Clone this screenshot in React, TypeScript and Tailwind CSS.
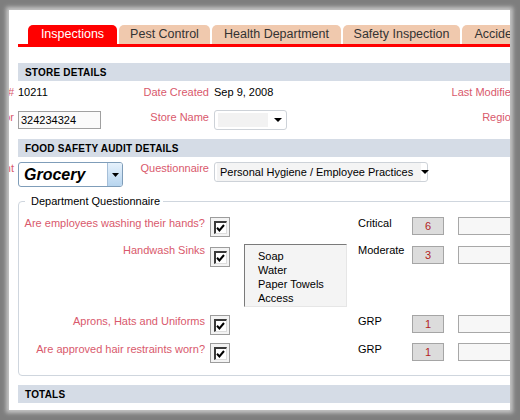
import React from 'react'

const label = 'text-[#d9596c]'

const tabs = [
  { name: 'Inspections', cls: 'w-[89px] bg-[#ff0000] text-white' },
  { name: 'Pest Control', cls: 'w-[91px] bg-[#f0c9ae] text-[#333]' },
  { name: 'Health Department', cls: 'w-[129px] bg-[#f0c9ae] text-[#333]' },
  { name: 'Safety Inspection', cls: 'w-[117px] bg-[#f0c9ae] text-[#333]' },
  { name: 'Accident Reports', cls: 'w-[120px] bg-[#f0c9ae] text-[#333]' },
]

function Arrow() {
  return (
    <svg width="8" height="4" viewBox="0 0 8 4">
      <path d="M0 0h8L4 4z" fill="#000" />
    </svg>
  )
}

function SectionBar({ title, className = '' }: { title: string; className?: string }) {
  return (
    <div className={`flex h-[18px] items-center bg-[#d5dce6] pl-[7px] text-[10px] font-bold tracking-[0.2px] ${className}`}>
      {title}
    </div>
  )
}

function Check() {
  return (
    <span className="flex h-[20px] w-[20px] shrink-0 items-center justify-center border border-[#9c9c9c] bg-[#f3f3f3]">
      <span className="flex h-[13px] w-[13px] items-center justify-center border-b border-l-2 border-r border-t-2 border-b-[#dcdcdc] border-l-[#3a3a3a] border-r-[#dcdcdc] border-t-[#3a3a3a] bg-white">
        <svg width="9" height="8" viewBox="0 0 9 8">
          <path d="M1 3.8L3.4 6.4L8 1" fill="none" stroke="#000" strokeWidth="2" />
        </svg>
      </span>
    </span>
  )
}

function QuestionRow({ q, sev, score, list }: { q: string; sev: string; score: string; list?: string[] }) {
  const off = list ? 'mt-[3px]' : ''
  const off2 = list ? 'mt-[2px]' : ''
  return (
    <div className="flex items-start">
      <span className={`w-[186px] shrink-0 whitespace-nowrap text-right leading-[13px] ${label}`}>{q}</span>
      <span className={`ml-[5px] ${off}`}>
        <Check />
      </span>
      <div className="ml-[14px] w-[103px] shrink-0">
        {list && (
          <div className="h-[63px] border-b border-l border-r border-t border-b-[#e6e6e6] border-l-[#7a7a7a] border-r-[#e6e6e6] border-t-[#7a7a7a] bg-[#f4f4f4] pl-[13px] pt-[4px] leading-[14px]">
            {list.map((i) => (
              <div key={i}>{i}</div>
            ))}
          </div>
        )}
      </div>
      <span className="ml-[11px] w-[54px] shrink-0 leading-[13px]">{sev}</span>
      <span className={`flex h-[18px] w-[32px] shrink-0 items-center justify-center border border-[#a5a5a5] bg-[#dcdcdc] text-[#b32424] ${off2}`}>
        {score}
      </span>
      <span className={`ml-[14px] h-[18px] w-[100px] shrink-0 border border-[#a8a8a8] bg-[#f7f7f7] ${off2}`} />
    </div>
  )
}

export default function App() {
  return (
    <div className="h-[420px] w-[520px] bg-[#7e7e7e] pl-[9px] pt-[10px] font-['Liberation_Sans',Arial,sans-serif] text-[11px] text-black">
      <div className="h-[400px] w-[501px] overflow-hidden bg-white shadow-[0_0_4px_3px_#c4c4c4]">
        <div className="w-[620px] pl-[9px] pt-[15px]">
          {/* Tabs */}
          <div className="flex gap-[2px] pl-[10px]">
            {tabs.map((t) => (
              <div
                key={t.name}
                className={`flex h-[19px] shrink-0 items-center justify-center whitespace-nowrap rounded-t-[5px] text-[12.5px] ${t.cls}`}
              >
                {t.name}
              </div>
            ))}
          </div>
          <div className="h-[3px] bg-[#ff0000]" />

          {/* Store details */}
          <SectionBar title="STORE DETAILS" className="mt-[16px]" />
          <div className="flex h-[22px] items-center">
            <div className="flex w-[110px] shrink-0">
              <span className={`-ml-[84px] mr-[4px] w-[80px] shrink-0 text-right ${label}`}>Store #</span>
              <span>10211</span>
            </div>
            <span className={`w-[81px] shrink-0 text-right ${label}`}>Date Created</span>
            <span className="ml-[5px] w-[200px] shrink-0">Sep 9, 2008</span>
            <span className={`w-[103px] shrink-0 whitespace-nowrap text-right ${label}`}>Last Modified</span>
          </div>
          <div className="mt-[7px] flex h-[20px] items-start">
            <div className="flex w-[110px] shrink-0 items-start">
              <span className={`-ml-[84px] mr-[4px] mt-[1px] w-[80px] shrink-0 text-right leading-[13px] ${label}`}>Inspector</span>
              <span className="mt-[1px] flex h-[18px] w-[83px] items-center border border-[#a0a0a0] bg-[#fafafa] pl-[2px]">324234324</span>
            </div>
            <span className={`mt-[1px] w-[81px] shrink-0 text-right leading-[13px] ${label}`}>Store Name</span>
            <div className="ml-[5px] w-[200px] shrink-0">
              <div className="flex h-[20px] w-[73px] items-center rounded-[3px] border border-[#cdd2d8] bg-white pl-[3px] pr-[4px]">
                <span className="h-[14px] w-[50px] bg-[#f2f2f2]" />
                <span className="ml-auto flex">
                  <Arrow />
                </span>
              </div>
            </div>
            <span className={`mt-[1px] w-[103px] shrink-0 text-right leading-[13px] ${label}`}>Region</span>
          </div>

          {/* Food safety */}
          <SectionBar title="FOOD SAFETY AUDIT DETAILS" className="mt-[9px]" />
          <div className="mt-[5px] flex h-[25px] items-start">
            <div className="flex w-[110px] shrink-0 items-start">
              <span className={`-ml-[84px] mr-[4px] w-[80px] shrink-0 text-right leading-[13px] ${label}`}>Department</span>
              <div className="flex h-[25px] w-[105px] shrink-0 overflow-hidden rounded-[3px] border border-[#7f9db9] bg-white">
                <span className="flex-1 pl-[5px] text-[16px] font-bold italic leading-[23px]">Grocery</span>
                <span className="flex w-[15px] items-center justify-center border-l border-[#a6bfd8] bg-linear-to-b from-[#e6f1fb] to-[#b7d5ef]">
                  <svg width="7" height="4" viewBox="0 0 7 4">
                    <path d="M0 0h7L3.5 4z" fill="#000" />
                  </svg>
                </span>
              </div>
            </div>
            <span className={`w-[81px] shrink-0 text-right leading-[13px] ${label}`}>Questionnaire</span>
            <div className="ml-[5px] flex h-[20px] w-[214px] shrink-0 items-center rounded-[3px] border border-[#cdd2d8] bg-white pl-[2px] pr-[4px]">
              <span className="whitespace-nowrap bg-[#f4f4f4] py-[1px] pl-[3px] pr-[8px]">Personal Hygiene / Employee Practices</span>
              <span className="ml-auto flex">
                <Arrow />
              </span>
            </div>
          </div>

          <fieldset className="mt-[7px] rounded-[4px] border border-[#cfd6de] pb-[12px] pt-[9px]">
            <legend className="ml-[6px] pl-[6px] pr-[3px] leading-[14px]">Department Questionnaire</legend>
            <QuestionRow q="Are employees washing their hands?" sev="Critical" score="6" />
            <div className="mt-[7px]">
              <QuestionRow
                q="Handwash Sinks"
                sev="Moderate"
                score="3"
                list={['Soap', 'Water', 'Paper Towels', 'Access']}
              />
            </div>
            <div className="mt-[8px]">
              <QuestionRow q="Aprons, Hats and Uniforms" sev="GRP" score="1" />
            </div>
            <div className="mt-[8px]">
              <QuestionRow q="Are approved hair restraints worn?" sev="GRP" score="1" />
            </div>
          </fieldset>

          <SectionBar title="TOTALS" className="mt-[9px]" />
        </div>
      </div>
    </div>
  )
}
